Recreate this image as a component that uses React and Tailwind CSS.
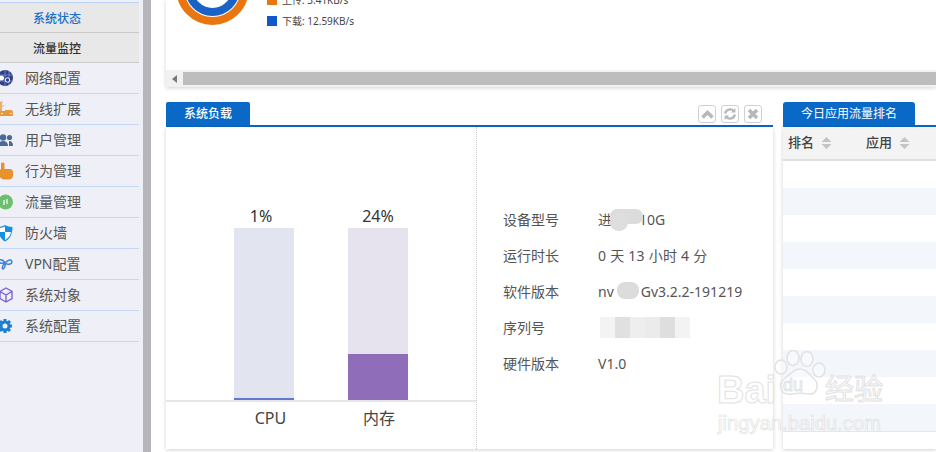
import React from "react";

const menu = [
  ["网络配置", "net"],
  ["无线扩展", "wifi"],
  ["用户管理", "user"],
  ["行为管理", "hand"],
  ["流量管理", "flow"],
  ["防火墙", "fw"],
  ["VPN配置", "vpn"],
  ["系统对象", "obj"],
  ["系统配置", "cfg"],
];

function MenuIcon({ type }) {
  switch (type) {
    case "net":
      return (
        <svg width="20" height="20" viewBox="0 0 20 20">
          <circle cx="5" cy="10" r="8" fill="#2b3f8c" />
          <path d="M-3 7h16M-3 13h16M5 2v16M9 3v14" stroke="#8f9cc9" strokeWidth=".7" />
          <circle cx="1.500" cy="10" r="2.500" fill="#fff" />
          <circle cx="7.500" cy="12" r="2.200" fill="#2b3f8c" stroke="#fff" />
        </svg>
      );
    case "wifi":
      return (
        <svg width="20" height="20" viewBox="0 0 20 20">
          <rect x="-2" y="12" width="15" height="5" fill="#e8973a" />
          <path d="M1 12V3" stroke="#e8973a" strokeWidth="1.500" />
          <path d="M-2 6a3.500 3.500 0 0 0 6 0M-1 3h4" fill="none" stroke="#eeb67c" strokeWidth="1.200" />
          <path d="M5 11.500h7" stroke="#e8973a" />
          <circle cx="2" cy="14.500" r=".8" fill="#fff" />
          <circle cx="11" cy="14.500" r=".8" fill="#fff" />
        </svg>
      );
    case "user":
      return (
        <svg width="20" height="20" viewBox="0 0 20 20">
          <circle cx="3" cy="7.500" r="3.200" fill="#4a6a9c" />
          <circle cx="9.500" cy="7.500" r="2.600" fill="#4a6a9c" />
          <path d="M-2 16c0-4 3-5 5-5s5 1 5 5z" fill="#4a6a9c" />
          <path d="M9 11c2 0 4 1 4 5H9z" fill="#4a6a9c" />
        </svg>
      );
    case "hand":
      return (
        <svg width="20" height="20" viewBox="0 0 20 20">
          <path d="M1 2.500c0-1.500 3.500-1.500 3.500 0V8h5.500c2 0 3 1.500 3 3.500v3c0 2.500-2 4-4 4H3l-3-2V9l1-1z" fill="#e8912f" />
        </svg>
      );
    case "flow":
      return (
        <svg width="20" height="20" viewBox="0 0 20 20">
          <circle cx="5.500" cy="10" r="7.500" fill="#6cbf6c" />
          <path d="M4 8v5M7 7v5" stroke="#fff" strokeWidth="1.200" />
        </svg>
      );
    case "fw":
      return (
        <svg width="20" height="20" viewBox="0 0 20 20">
          <path d="M-2 4c2 0 6-1 7-2 2 1 5 2 7.500 2 0 7-2.500 12-7.500 14.500C0 16-2 10-2 4z" fill="#1690dc" />
          <path d="M5 3.500V9h-6V5c2 0 4-.5 6-1.500z" fill="#fff" />
          <path d="M5 9h6c-.5 3.500-3 6.500-6 8z" fill="#fff" />
        </svg>
      );
    case "vpn":
      return (
        <svg width="20" height="20" viewBox="0 0 20 20" fill="none" stroke="#3f7fdc" strokeWidth="1.500">
          <path d="M-1 6c3-1 5 1 6 3s-1 6-2 6-1-3 1-5 4-4 6-4 3 3 0 4-5-1-6-1-4 1-5-1" />
        </svg>
      );
    case "obj":
      return (
        <svg width="20" height="20" viewBox="0 0 20 20" fill="none" stroke="#7b62d3" strokeWidth="1.400">
          <path d="M6 3l6 3.500v7L6 17l-6-3.500v-7zM0 6.500l6 3.500 6-3.500M6 10v7" />
        </svg>
      );
    default:
      return (
        <svg width="20" height="20" viewBox="0 0 20 20">
          <path d="M5 3v14M-2 10h14M0 5l10 10M10 5L0 15" stroke="#1e7fd0" strokeWidth="3" />
          <circle cx="5" cy="10" r="5.500" fill="#1e7fd0" />
          <circle cx="5" cy="10" r="2.500" fill="#eff0f7" />
        </svg>
      );
  }
}

function Sort() {
  return (
    <svg width="11" height="14" viewBox="0 0 11 14" fill="#c4c4c4" className="ml-[7px]">
      <path d="M5.500 1L10.500 6H.5zM5.500 13L.5 8h10z" />
    </svg>
  );
}

function Ctl({ children }) {
  return (
    <div className="w-[18px] h-[18px] border border-[#d0d0d0] rounded-[3px] bg-white flex items-center justify-center">
      {children}
    </div>
  );
}

function Bar({ label, track, fill, h, shift }) {
  return (
    <div className="w-[60px] flex flex-col items-center">
      <div className={`text-[16px] leading-[20px] text-[#333] mb-[2px] ${shift}`}>{label}</div>
      <div className={`w-[60px] h-[172px] flex flex-col justify-end ${track}`}>
        <div className={`${fill} ${h}`}></div>
      </div>
    </div>
  );
}

function Row({ label, children }) {
  return (
    <div className="flex h-[36px] items-center text-[14px] text-[#555]">
      <div className="w-[95px]">{label}</div>
      <div className="relative">{children}</div>
    </div>
  );
}

export default function App() {
  return (
    <div
      className="relative w-[936px] h-[452px] overflow-hidden bg-white flex"
      style={{ fontFamily: '"Noto Sans", "Noto Sans CJK SC", sans-serif' }}
    >
      {/* Sidebar */}
      <aside className="w-[143px] h-full bg-[#eff0f7] shrink-0 pt-[2px]">
        <div className="w-[139px] border-t border-[#bcd4f5]"></div>
        <div className="w-[139px] h-[30px] bg-[#e8e8e8] border-b border-[#c9c9c9] flex items-center pl-[33px] pt-[2px] text-[12px] font-medium text-[#1a6fc9]">
          系统状态
        </div>
        <div className="w-[139px] h-[30px] bg-[#e8e8e8] border-b border-[#c9c9c9] flex items-center pl-[33px] pt-[2px] text-[12px] font-medium text-[#333]">
          流量监控
        </div>
        {menu.map(([t, k]) => (
          <div key={k} className="w-[139px] h-[31px] border-b border-[#c3d8f7] flex items-center text-[14px] text-[#555]">
            <div className="w-[25px] h-[20px] shrink-0">
              <MenuIcon type={k} />
            </div>
            <span className="pb-[2px]">{t}</span>
          </div>
        ))}
      </aside>
      <div className="w-[8px] h-full bg-[#b5b5bb] shrink-0"></div>

      {/* Main */}
      <main className="flex-1 min-w-0 pl-[15px]">
        {/* Top panel */}
        <section className="h-[87px] bg-white shadow-[0_1px_4px_rgba(0,0,0,0.18)] flex flex-col overflow-hidden">
          <div className="h-[70px] flex overflow-hidden">
            <svg width="72" height="27" viewBox="0 0 72 27" className="ml-[11px] shrink-0">
              <circle cx="35.500" cy="-11.300" r="32.300" fill="none" stroke="#ea7610" strokeWidth="8" />
              <circle cx="35.500" cy="-11.300" r="23.300" fill="none" stroke="#1a62c6" strokeWidth="8" />
            </svg>
            <div className="ml-[18px] text-[10px] text-[#444]">
              <div className="flex items-center -mt-[6px] h-[12px] leading-[12px]">
                <span className="w-[10px] h-[10px] bg-[#ea7610] mr-[5px]"></span>上传: 3.41KB/s
              </div>
              <div className="flex items-center h-[12px] mt-[9px] leading-[12px]">
                <span className="w-[10px] h-[10px] bg-[#1158c8] mr-[5px]"></span>下载: 12.59KB/s
              </div>
            </div>
          </div>
          <div className="h-[17px] bg-[#f1f1f1] flex items-center">
            <div className="w-[17px] flex justify-center">
              <svg width="5" height="8" viewBox="0 0 5 8" fill="#777"><path d="M5 0v8L0 4z" /></svg>
            </div>
            <div className="flex-1 h-[13px] bg-[#bdbdbd]"></div>
          </div>
        </section>

        <div className="flex gap-[10px] mt-[15px]">
          {/* System load */}
          <section className="w-[607px] shrink-0">
            <div className="flex items-end justify-between h-[25px] border-b-2 border-[#0a68c6]">
              <div className="w-[84px] h-[23px] bg-[#0a68c6] rounded-t-[2px] text-white text-[12px] font-medium flex items-center justify-center">
                系统负载
              </div>
              <div className="flex gap-[5px] mb-[2px] mr-[11px]">
                <Ctl>
                  <svg width="13" height="10" viewBox="0 0 13 10" fill="none" stroke="#b8b8b8" strokeWidth="3.500"><path d="M1.500 8.500L6.500 3.500l5 5" /></svg>
                </Ctl>
                <Ctl>
                  <svg width="14" height="14" viewBox="0 0 13 13" fill="none" stroke="#b8b8b8" strokeWidth="2.200"><path d="M2 6a4.500 4.500 0 0 1 8-2M11 7a4.500 4.500 0 0 1-8 2" /><path d="M11.500 1v4h-4zM1.500 12V8h4z" fill="#b8b8b8" stroke="none" /></svg>
                </Ctl>
                <Ctl>
                  <svg width="12" height="12" viewBox="0 0 12 12" fill="none" stroke="#b8b8b8" strokeWidth="3.500"><path d="M2 2l8 8M10 2l-8 8" /></svg>
                </Ctl>
              </div>
            </div>
            <div className="h-[322px] bg-white shadow-[0_1px_4px_rgba(0,0,0,0.18)] flex">
              <div className="w-[311px] h-full border-r border-dotted border-[#cccccc] shrink-0">
                <div className="h-[275px] border-b-2 border-[#e6e6ea] flex items-end pl-[68px] gap-[54px]">
                  <Bar label="1%" shift="-translate-x-[3px]" track="bg-[#e2e4f0]" fill="bg-[#6478cf]" h="h-[2px]" />
                  <Bar label="24%" track="bg-[#e6e3ee]" fill="bg-[#8f6db9]" h="h-[46px]" />
                </div>
                <div className="flex pl-[68px] gap-[54px] text-[16px] text-[#444] mt-[5px] leading-[22px]">
                  <div className="w-[60px] text-center pl-[13px]">CPU</div>
                  <div className="w-[60px] text-center pl-[2px]">内存</div>
                </div>
              </div>
              <div className="flex-1 pl-[26px] pt-[74px]">
                <Row label="设备型号">
                  进<span className="inline-block w-[27px]"></span>10G
                  <span className="absolute left-[12px] top-[0px] w-[33px] h-[15px] rounded-[7px] bg-[#dcdcdc]"></span>
                  <span className="absolute left-[12px] top-[5px] w-[18px] h-[17px] rounded-full bg-[#dedede]"></span>
                </Row>
                <Row label="运行时长"><span className="tracking-[0.25px]">0 天 13 小时 4 分</span></Row>
                <Row label="软件版本">
                  nv<span className="inline-block w-[27px]"></span>Gv3.2.2-191219
                  <span className="absolute left-[19px] top-[1px] w-[22px] h-[17px] rounded-[8px] bg-[#dcdcdc]"></span>
                </Row>
                <Row label="序列号">
                  <span className="flex h-[21px] w-[90px] ml-[2px]">
                    <span className="w-[15px] bg-[#f3f3f3]"></span>
                    <span className="w-[15px] bg-[#e0e0e0]"></span>
                    <span className="w-[15px] bg-[#eeeeee]"></span>
                    <span className="w-[15px] bg-[#ebebeb]"></span>
                    <span className="w-[15px] bg-[#dedede]"></span>
                    <span className="w-[15px] bg-[#f3f3f3]"></span>
                  </span>
                </Row>
                <Row label="硬件版本">V1.0</Row>
              </div>
            </div>
          </section>

          {/* Ranking */}
          <section className="flex-1 min-w-0">
            <div className="h-[25px] border-b-2 border-[#0a68c6] flex items-end">
              <div className="w-[132px] h-[23px] bg-[#0a68c6] rounded-t-[3px] text-white text-[12px] flex items-center justify-center">
                今日应用流量排名
              </div>
            </div>
            <div className="h-[322px] bg-white shadow-[0_1px_4px_rgba(0,0,0,0.18)]">
              <div className="h-[34px] bg-[#f3f3f3] border-b-2 border-[#dfdfdf] flex items-center text-[13px] font-medium text-[#444]">
                <div className="w-[83px] pl-[5px] flex items-center">排名<Sort /></div>
                <div className="flex items-center">应用<Sort /></div>
              </div>
              {[0, 1, 2, 3, 4, 5, 6, 7, 8, 9].map((i) => (
                <div key={i} className={`h-[27px] ${i % 2 ? "bg-[#f3f6fa]" : "bg-white"}`}></div>
              ))}
              <div className="border-t border-[#e3e6ea]"></div>
            </div>
          </section>
        </div>
      </main>

      {/* Watermark */}
      <div className="absolute left-[717px] top-[350px] w-[180px] h-[90px] pointer-events-none">
        <svg width="60" height="60" viewBox="0 0 60 60" className="absolute left-[55px] top-[0px]" fill="#ffffff66" stroke="#e2e2e2" strokeWidth="1.500">
          <ellipse cx="9" cy="17" rx="6" ry="7" />
          <ellipse cx="21" cy="8" rx="6" ry="7.500" />
          <ellipse cx="35" cy="9" rx="6" ry="7.500" />
          <ellipse cx="47" cy="20" rx="6" ry="7" />
          <path d="M28 19c7 0 9 6 14 10 5 4 4 15-4 15-4 0-7-1-10-1s-8 2-13 1c-7-1-8-11-3-15 6-4 9-10 16-10z" />
        </svg>
        <div className="absolute left-[0px] top-[18px] text-[38px] leading-[44px] font-bold text-[#ffffff66] [-webkit-text-stroke:1px_#e2e2e2]" style={{ fontFamily: '"Liberation Sans", sans-serif' }}>Bai</div>
        <div className="absolute left-[66px] top-[25px] text-[18px] leading-[20px] text-[#ffffff66] [-webkit-text-stroke:1px_#e2e2e2]" style={{ fontFamily: '"Liberation Sans", sans-serif' }}>du</div>
        <div className="absolute left-[108px] top-[22px] text-[29px] leading-[34px] text-[#ffffff66] [-webkit-text-stroke:1px_#e2e2e2]">经验</div>
        <div className="absolute left-[1px] top-[61px] text-[20px] leading-[24px] tracking-[0.1px] text-[#ffffff66] [-webkit-text-stroke:0.7px_#e2e2e2]" style={{ fontFamily: '"Liberation Sans", sans-serif' }}>jingyan.baidu.com</div>
      </div>
    </div>
  );
}
